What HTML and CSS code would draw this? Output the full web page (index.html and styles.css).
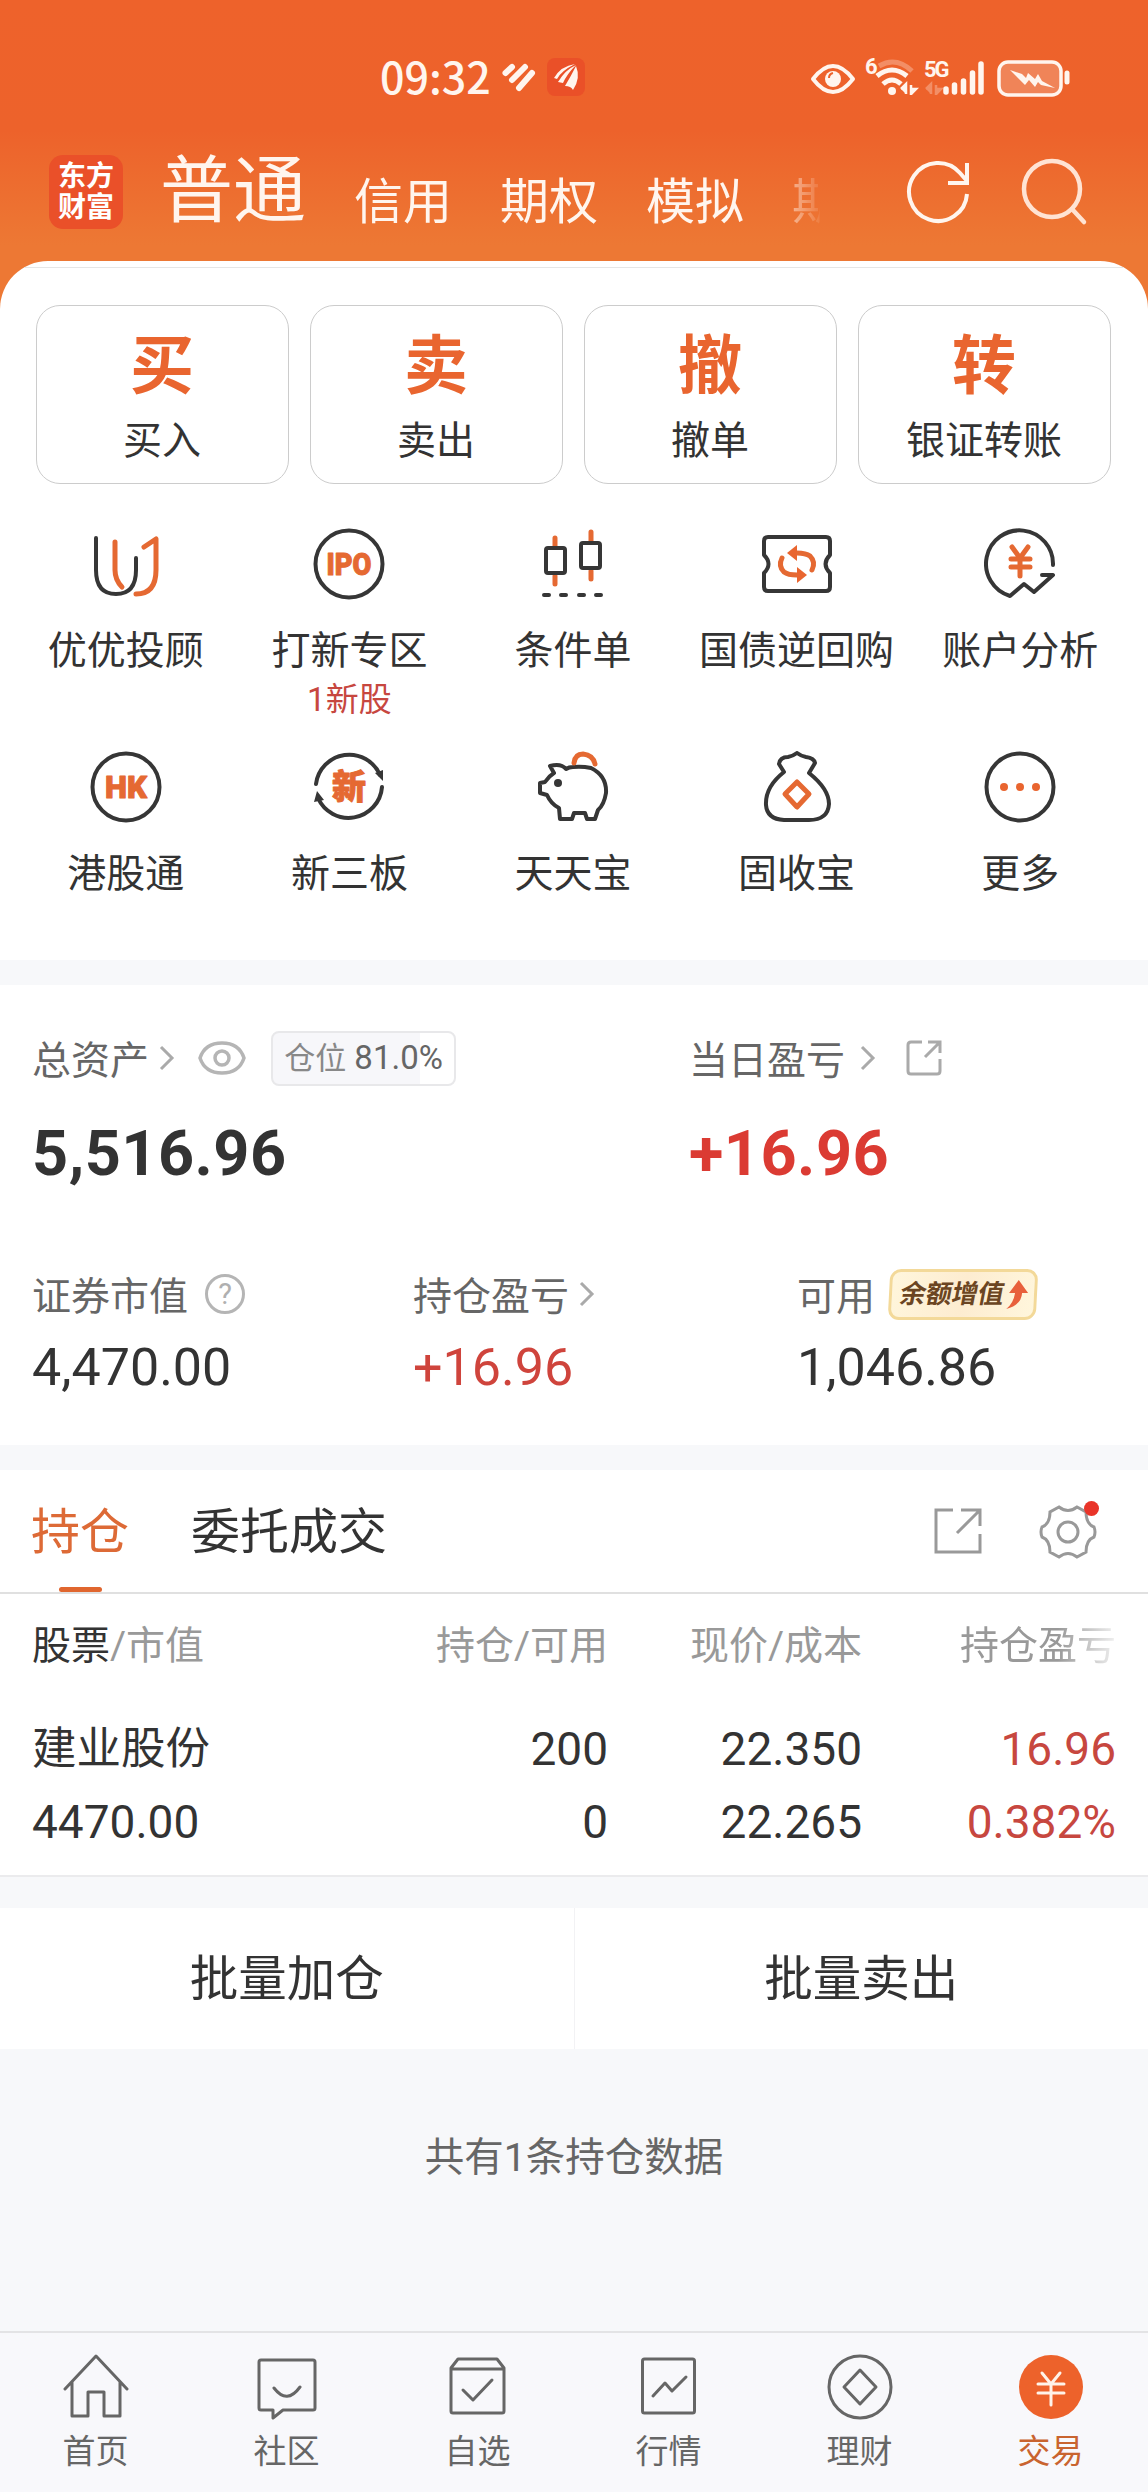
FILE: index.html
```html
<!DOCTYPE html>
<html lang="zh-CN">
<head>
    <meta charset="UTF-8">
    <title>交易</title>
    <link rel="stylesheet" href="styles.css">
</head>
<body>
<div class="app">

    <!-- Status bar -->
    <div class="status">
        <span class="clock">09:32</span>
        <svg class="heart" width="36" height="30" viewBox="0 0 36 30" fill="none" stroke="#fff5ee" stroke-width="6" stroke-linecap="round">
            <path d="M4.500 11L11 5M11 18L24 5M18 26L31 11"/>
        </svg>
        <svg class="mini-app" width="38" height="38" viewBox="0 0 38 38">
            <rect width="38" height="38" rx="8" fill="#ea5028"/>
            <path d="M7 20Q14 8 28 6Q14 13 10 21zM11 24Q18 12 29 7Q20 16 16 25zM18 28Q24 18 29 8Q34 20 26 32Q24 28 18 28z" fill="#fff5ee"/>
        </svg>
        <svg class="sys" width="264" height="44" viewBox="0 0 264 44" fill="none" stroke="#fff5ee">
            <path d="M3 24Q23-2 43 24Q23 50 3 24z" stroke-width="4" stroke-linejoin="round"/>
            <circle cx="23" cy="24" r="8" fill="#fff5ee" stroke="none"/>
            <path d="M19 23q0-4 4-5" stroke="#ed622b" stroke-width="2"/>
            <text x="55" y="19" class="sys-text">6</text>
            <path d="M69 11Q86 1 102 16" stroke-width="5" opacity=".3"/>
            <path d="M67 21Q82 9 97 21M73 29Q82 21 91 29" stroke-width="5"/>
            <circle cx="82" cy="36" r="4" fill="#fff5ee" stroke="none"/>
            <path d="M91 34l5-5v10M101 40V30M101 39l5-5h-5" fill="#fff5ee" stroke-width="2.500"/>
            <text x="114" y="22" class="sys-text">5G</text>
            <path d="M116 34l5-5v10M126 40V30M126 39l5-5h-5" fill="#fff5ee" stroke-width="2.500" opacity=".3"/>
            <path d="M136 34v3M144.500 30v7M153.500 26v11M162.500 18v19M171 9v28" stroke-width="5.500" stroke-linecap="round"/>
            <rect x="189" y="7" width="62" height="33" rx="9" fill="#f08458" stroke-width="3.500"/>
            <path d="M200 15l12 4 4 4 2-5 7 6 3-5 4 7 13 7-14-3-3-3-3 5-6-7-4 5z" fill="#fff5ee" stroke="none"/>
            <path d="M257 18v9" stroke-width="5" stroke-linecap="round"/>
        </svg>
    </div>

    <!-- Account tabs -->
    <div class="nav">
        <div class="logo">东方<br>财富</div>
        <div class="nav-tab active">普通</div>
        <div class="nav-tab">信用</div>
        <div class="nav-tab">期权</div>
        <div class="nav-tab">模拟</div>
        <div class="nav-tab cut">期</div>
        <svg class="refresh" width="70" height="72" viewBox="0 0 70 72" fill="none" stroke="#fff5ee" stroke-width="4">
            <path d="M63 37A29 29 0 1 1 56 16L63 24"/>
            <path d="M63 6V26H44"/>
        </svg>
        <svg class="search" width="70" height="72" viewBox="0 0 70 72" fill="none" stroke="#ffe3d3" stroke-width="4.500" stroke-linecap="round">
            <circle cx="32" cy="32" r="28"/>
            <path d="M52 52L64 65"/>
        </svg>
    </div>

    <div class="sheet">
        <div class="sheet-line"></div>

        <div class="cards">
            <div class="card"><b>买</b><span>买入</span></div>
            <div class="card"><b>卖</b><span>卖出</span></div>
            <div class="card"><b>撤</b><span>撤单</span></div>
            <div class="card"><b>转</b><span>银证转账</span></div>
        </div>

        <div class="grid">
            <div class="cell">
                <svg class="icon" viewBox="0 0 72 72">
                    <path class="dk" d="M6 10V42Q6 66 26 66Q46 66 46 42V30"/>
                    <path class="or" d="M25 14V42Q25 52 32 59M54 19L66 11V42Q66 66 46 66"/>
                </svg>
                <span>优优投顾</span>
            </div>
            <div class="cell">
                <svg class="icon" viewBox="0 0 72 72">
                    <circle class="dk" cx="36" cy="36" r="33.500"/>
                    <text class="icon-text" x="36" y="47" font-size="31" textLength="45" lengthAdjust="spacingAndGlyphs">IPO</text>
                </svg>
                <span>打新专区</span>
                <em>1新股</em>
            </div>
            <div class="cell">
                <svg class="icon" viewBox="0 0 72 72">
                    <path class="or" d="M18 10V18M18 48V56M54 4V13M54 43V51"/>
                    <rect class="dk" x="9" y="20" width="19" height="25" rx="2"/>
                    <rect class="dk" x="44" y="15" width="19" height="25" rx="2"/>
                    <path class="dk" d="M7 67h5M24 67h5M42 67h5M59 67h5"/>
                </svg>
                <span>条件单</span>
            </div>
            <div class="cell">
                <svg class="icon" viewBox="0 0 72 72">
                    <path class="dk" d="M7 9H65Q69 9 69 13V27Q60 36 69 45V59Q69 63 65 63H7Q3 63 3 59V45Q12 36 3 27V13Q3 9 7 9z"/>
                    <path class="or" d="M21 30Q17 38 23 44Q27 47 36 47M51 42Q55 34 49 28Q45 25 36 25"/>
                    <path class="of" d="M26 25L36 17V33zM46 47L36 39V55z"/>
                </svg>
                <span>国债逆回购</span>
            </div>
            <div class="cell">
                <svg class="icon" viewBox="0 0 72 72">
                    <path class="dk" d="M69 37A33.500 33.500 0 1 0 26 68L40 56L50 64L69 47H58"/>
                    <path class="or" d="M28 19L36 30L44 19M36 30V48M27 31H46M27 39H46"/>
                </svg>
                <span>账户分析</span>
            </div>
            <div class="cell">
                <svg class="icon" viewBox="0 0 72 72">
                    <circle class="dk" cx="36" cy="36" r="33.500"/>
                    <text class="icon-text" x="36" y="47" font-size="31" textLength="42" lengthAdjust="spacingAndGlyphs">HK</text>
                </svg>
                <span>港股通</span>
            </div>
            <div class="cell">
                <svg class="icon" viewBox="0 0 72 72">
                    <path class="dk" d="M3 33A33.500 33.500 0 0 1 67 24M69 36A33.500 33.500 0 0 1 5 47"/>
                    <path class="df" d="M62 22L70 19V30zM1 51L4 40L11 49z"/>
                    <text class="icon-text" x="36" y="48" font-size="34">新</text>
                </svg>
                <span>新三板</span>
            </div>
            <div class="cell">
                <svg class="icon" viewBox="0 0 72 72">
                    <path class="dk" d="M36 16Q45 15 54 17Q70 25 69 42Q67 54 61 59L58 68H50L48 62H37L35 68H23L22 57Q14 53 10 44L3 42V32L8 31Q12 25 17 22L13 15Q24 12 29 18Q32 16 36 16z"/>
                    <path class="or" d="M37 12Q38 3 46 3Q56 4 58 13"/>
                    <circle class="df" cx="21" cy="32" r="4"/>
                </svg>
                <span>天天宝</span>
            </div>
            <div class="cell">
                <svg class="icon" viewBox="0 0 72 72">
                    <path class="dk" d="M23 21L18 13Q19 6 27 6Q32 5 36 2Q40 5 45 6Q53 7 54 12L48 22Q68 38 68 53Q67 69 48 69H23Q6 68 5 54Q4 36 23 21z"/>
                    <path class="or" d="M36 31L48 43L36 56L24 43z"/>
                </svg>
                <span>固收宝</span>
            </div>
            <div class="cell">
                <svg class="icon" viewBox="0 0 72 72">
                    <circle class="dk" cx="36" cy="36" r="33.500"/>
                    <circle class="of" cx="20" cy="36" r="4"/>
                    <circle class="of" cx="36" cy="36" r="4"/>
                    <circle class="of" cx="52" cy="36" r="4"/>
                </svg>
                <span>更多</span>
            </div>
        </div>
    </div>

    <div class="gap"></div>

    <!-- Assets -->
    <div class="assets">
        <div class="total">
            <div class="col">
                <div class="label"><span>总资产</span>
                    <svg class="chev" width="16" height="26" viewBox="0 0 16 26"><path d="M2 2L13 13L2 24"/></svg>
                    <svg class="eye" width="48" height="34" viewBox="0 0 48 34"><path d="M2 17Q7 2 24 2T46 17Q41 32 24 32T2 17z"/><circle cx="24" cy="17" r="7"/></svg>
                    <div class="position"><i>仓位</i> 81.0%</div>
                </div>
                <div class="big">5,516.96</div>
            </div>
            <div class="col">
                <div class="label"><span>当日盈亏</span>
                    <svg class="chev wide" width="16" height="26" viewBox="0 0 16 26"><path d="M2 2L13 13L2 24"/></svg>
                    <svg class="share" width="38" height="38" viewBox="0 0 38 38"><path d="M17 3H6Q3 3 3 6V32Q3 35 6 35H32Q35 35 35 32V20M23 3H35V14M34 4L20 18"/></svg>
                </div>
                <div class="big red">+16.96</div>
            </div>
        </div>
        <div class="detail">
            <div class="col">
                <div class="label"><span>证券市值</span>
                    <svg class="help" width="42" height="42" viewBox="0 0 42 42"><circle cx="21" cy="21" r="18.500"/><text x="21" y="31">?</text></svg>
                </div>
                <div class="num">4,470.00</div>
            </div>
            <div class="col">
                <div class="label"><span>持仓盈亏</span>
                    <svg class="chev" width="16" height="26" viewBox="0 0 16 26"><path d="M2 2L13 13L2 24"/></svg>
                </div>
                <div class="num red">+16.96</div>
            </div>
            <div class="col">
                <div class="label"><span>可用</span>
                    <div class="promo"><b>余额增值</b><svg width="24" height="32" viewBox="0 0 24 32"><path d="M13 1L23 14H17Q17 26 2 30Q9 24 10 14H4z" fill="#e8603c"/></svg></div>
                </div>
                <div class="num">1,046.86</div>
            </div>
        </div>
    </div>

    <div class="gap"></div>

    <!-- Holdings -->
    <div class="tabs">
        <div class="tab active">持仓</div>
        <div class="tab">委托成交</div>
        <svg class="open" width="50" height="50" viewBox="0 0 50 50"><path d="M20 4H3V46H47V28M28 4H47V20M46 5L24 27"/></svg>
        <div class="gear">
            <svg width="58" height="58" viewBox="0 0 58 58"><path d="M20 4Q29 11 38 4L47 9Q47 21 55 24Q57 29 55 34Q47 37 47 49L38 54Q29 47 20 54L11 49Q11 37 3 34Q1 29 3 24Q11 21 11 9z"/><circle cx="29" cy="29" r="10"/></svg>
            <i class="dot"></i>
        </div>
    </div>
    <div class="holdings">
        <div class="row head">
            <span><strong>股票</strong>/市值</span><span>持仓/可用</span><span>现价/成本</span><span class="fade">持仓盈亏</span>
        </div>
        <div class="row">
            <span class="name">建业股份</span><span>200</span><span>22.350</span><span class="up">16.96</span>
        </div>
        <div class="row">
            <span>4470.00</span><span>0</span><span>22.265</span><span class="up">0.382%</span>
        </div>
    </div>

    <div class="batch">
        <div>批量加仓</div>
        <div>批量卖出</div>
    </div>

    <div class="summary">共有1条持仓数据</div>

    <!-- Bottom bar -->
    <div class="bar">
        <div class="bar-item">
            <svg viewBox="0 0 66 66"><path d="M2 35L33 2L64 35M9 28V62H25V38H41V62H57V28"/></svg>首页
        </div>
        <div class="bar-item">
            <svg viewBox="0 0 66 66"><path d="M7 6H59Q61 6 61 8V54Q61 56 59 56H29L19 64V56H7Q5 56 5 54V8Q5 6 7 6zM20 34Q33 51 46 33"/></svg>社区
        </div>
        <div class="bar-item">
            <svg viewBox="0 0 66 66"><path d="M13 5H52L59 14V57Q59 59 57 59H8Q6 59 6 57V14zM6 15H59M18 36L28 46L47 26"/></svg>自选
        </div>
        <div class="bar-item">
            <svg viewBox="0 0 66 66"><rect x="6.500" y="5" width="52" height="54" rx="2"/><path d="M17 42L29 29L36 37L50 23"/></svg>行情
        </div>
        <div class="bar-item">
            <svg viewBox="0 0 66 66"><circle cx="33" cy="33" r="31"/><path d="M33 16L49 33L33 50L17 33z"/></svg>理财
        </div>
        <div class="bar-item on">
            <svg viewBox="0 0 66 66"><circle class="disc" cx="33" cy="33" r="32"/><path d="M24 19L33 30L42 19M33 30V51M20 30H46M20 39H46"/></svg>交易
        </div>
    </div>
</div>
</body>
</html>
```

FILE: styles.css
```css
body {
    margin: 0;
    font-family: Roboto, "Noto Sans CJK SC", sans-serif;
    color: #333;
}

.app {
    width: 1148px;
    height: 2492px;
    display: flex;
    flex-direction: column;
    overflow: hidden;
    background: linear-gradient(#ee622b 0, #ed622b 130px, #ed7834 245px, #ed7834 320px, #f7f8fa 320px);
}

i, em {
    font-style: normal;
}

svg {
    display: block;
    flex: none;
}

/* status bar */
.status {
    height: 156px;
    box-sizing: border-box;
    padding: 0 0 2px 380px;
    display: flex;
    align-items: center;
    color: #fff5ee;
}

.clock {
    font-family: "Noto Sans CJK SC", sans-serif;
    font-size: 43px;
    font-weight: 500;
    line-height: 46px;
    padding-bottom: 4px;
    width: 121px;
}

.mini-app {
    margin-left: 10px;
}

.sys {
    margin-left: 225px;
}

.sys-text {
    fill: #fff5ee;
    stroke: none;
    font-size: 22px;
    font-weight: 700;
    letter-spacing: -2px;
}

/* account tabs */
.nav {
    height: 105px;
    display: flex;
    color: #fff5ee;
    box-sizing: border-box;
    padding-left: 49px;
}

.logo {
    width: 74px;
    height: 74px;
    margin: -1px 37px 0 0;
    border-radius: 14px;
    background: #ea5029;
    color: #fff;
    font-size: 28px;
    font-weight: 700;
    line-height: 31px;
    text-align: center;
    box-sizing: border-box;
    padding-top: 6px;
}

.nav-tab {
    font-size: 49px;
    line-height: 60px;
    padding-top: 17px;
    margin-right: 48px;
    white-space: nowrap;
}

.nav-tab.active {
    font-size: 73px;
    line-height: 76px;
    padding-top: 0;
    margin-top: -3px;
}

/* last tab fades out under the toolbar icons */
.nav-tab.cut {
    height: 60px;
    margin-right: 63px;
    -webkit-mask-image: linear-gradient(90deg, rgba(0,0,0,.5), rgba(0,0,0,.1) 55%, transparent 58%);
    mask-image: linear-gradient(90deg, rgba(0,0,0,.5), rgba(0,0,0,.1) 55%, transparent 58%);
}

.refresh {
    margin-top: 1px;
}

.search {
    margin: 1px 0 0 46px;
}

/* white sheet */
.sheet {
    height: 699px;
    background: #fff;
    border-radius: 48px 48px 0 0;
}

.sheet-line {
    height: 1px;
    margin: 6px 24px 0;
    background: #e6e6e6;
    position: relative;
}

.cards {
    display: grid;
    grid-template-columns: repeat(4, 1fr);
    gap: 21px;
    padding: 37px 37px 0 36px;
}

.card {
    height: 179px;
    box-sizing: border-box;
    border: 1.5px solid #ccc;
    border-radius: 24px;
    display: flex;
    flex-direction: column;
    align-items: center;
    padding: 25px 1px 0 0;
}

.card b {
    font-size: 64px;
    line-height: 72px;
    color: #e9652f;
}

.card span {
    font-size: 39px;
    line-height: 50px;
    margin-top: 13px;
}

.grid {
    display: grid;
    grid-template-columns: repeat(5, 1fr);
    grid-auto-rows: 223px;
    padding: 44px 16px 0 14px;
}

.cell {
    display: flex;
    flex-direction: column;
    align-items: center;
    font-size: 39px;
    line-height: 50px;
    white-space: nowrap;
}

.icon {
    width: 72px;
    height: 72px;
    margin-bottom: 26px;
}

.cell em {
    font-size: 33px;
    line-height: 48px;
    color: #c7473f;
}

.dk, .or {
    fill: none;
    stroke: #363636;
    stroke-width: 4;
    stroke-linecap: round;
    stroke-linejoin: round;
}

.or {
    stroke: #e56932;
    stroke-width: 5;
}

.df {
    fill: #363636;
}

.of {
    fill: #e9652f;
}

.icon-text {
    fill: #e56932;
    stroke: #e56932;
    stroke-width: 1;
    stroke-linejoin: round;
    font-weight: 900;
    text-anchor: middle;
}

.gap {
    height: 25px;
    background: #f7f8fa;
}

/* assets */
.assets {
    height: 460px;
    background: #fff;
}

.total, .detail {
    display: grid;
    grid-template-columns: 657px 1fr;
    padding: 43px 32px 0;
}

.detail {
    grid-template-columns: 381px 384px 1fr;
    padding-top: 75px;
}

.label {
    display: flex;
    align-items: center;
    height: 60px;
    font-size: 39px;
    color: #666;
    white-space: nowrap;
}

.label > span {
    padding-bottom: 3px;
}

.label svg {
    fill: none;
    stroke: #aaa;
    stroke-width: 3;
}

.label .chev {
    margin-left: 10px;
}

.label .chev.wide {
    margin-left: 15px;
}

.label .eye {
    margin-left: 23px;
    stroke: #b5b5b5;
    stroke-width: 3.5;
}

.label .share {
    margin-left: 29px;
}

.label .help {
    margin-left: 16px;
    stroke: #b5b5b5;
}

.help text {
    fill: #b0b0b0;
    stroke: none;
    font-size: 29px;
    text-anchor: middle;
}

.position {
    margin-left: 25px;
    width: 185px;
    height: 55px;
    box-sizing: border-box;
    border: 2px solid #e8e8ea;
    border-radius: 8px;
    background: linear-gradient(90deg, #f7f7fa 81%, #fff 81%);
    font-size: 33px;
    line-height: 49px;
    text-align: center;
}

.position i {
    font-size: 31px;
    color: #888;
}

.big {
    font-size: 63px;
    font-weight: 700;
    line-height: 70px;
    margin-top: 31px;
    letter-spacing: 0.5px;
}

.num {
    font-size: 52px;
    line-height: 60px;
    margin-top: 14px;
}

.red {
    color: #db3b33;
}

.num.red {
    color: #cf443c;
}

.promo {
    margin-left: 14px;
    width: 148px;
    height: 51px;
    box-sizing: border-box;
    border: 3px solid #f3d999;
    border-radius: 11px;
    background: linear-gradient(100deg, #fff6dc, #fdecd0 50%, #fff6dc);
    transform: skewX(-3deg);
    display: flex;
    align-items: center;
    padding-left: 8px;
}

.promo b {
    font-size: 26px;
    line-height: 42px;
    padding-bottom: 2px;
    color: #6b4522;
    transform: skewX(-8deg);
}

.promo svg {
    stroke: none;
    margin-left: 1px;
}

/* holdings */
.tabs {
    height: 124px;
    box-sizing: border-box;
    border-bottom: 2px solid #e0e0e0;
    background: #fff;
    display: flex;
    padding-left: 31px;
    font-size: 49px;
    line-height: 126px;
}

.tab {
    margin-right: 62px;
}

.tab.active {
    color: #dd6a36;
    display: flex;
    flex-direction: column;
    align-items: center;
}

.tab.active::after {
    content: "";
    width: 43px;
    height: 6px;
    border-radius: 3px;
    background: #e0662f;
    margin-top: -9px;
}

.tabs svg {
    fill: none;
    stroke: #999;
    stroke-width: 3;
}

.open {
    margin: 36px 0 0 484px;
}

.gear {
    position: relative;
    margin: 33px 0 0 56px;
    width: 58px;
    height: 58px;
}

.dot {
    position: absolute;
    right: -2px;
    top: -2px;
    width: 15px;
    height: 15px;
    border-radius: 50%;
    background: #e93429;
}

.holdings {
    height: 283px;
    box-sizing: border-box;
    border-bottom: 2px solid #ebebed;
    background: #fff;
    padding-top: 15px;
}

.row {
    display: grid;
    grid-template-columns: 276px 300px 254px 254px;
    padding-left: 32px;
    height: 73px;
    line-height: 74px;
    font-size: 46px;
}

.row span {
    text-align: right;
    white-space: nowrap;
}

.row span:first-child {
    text-align: left;
}

.row.head {
    font-size: 39px;
    height: 103px;
    color: #999;
}

.head strong {
    font-weight: 400;
    color: #333;
}

.row .name {
    font-size: 44.5px;
}

.row .up {
    color: #c7473f;
}

.fade {
    -webkit-mask-image: linear-gradient(90deg, #000 77%, rgba(0,0,0,.15) 100%);
    mask-image: linear-gradient(90deg, #000 77%, rgba(0,0,0,.15) 100%);
}

.batch {
    display: flex;
    height: 141px;
    margin-top: 31px;
    background: #fff;
}

.batch div {
    flex: 1;
    text-align: center;
    font-size: 48.5px;
    line-height: 144px;
}

.batch div + div {
    border-left: 1px solid #f2f2f4;
}

.summary {
    height: 282px;
    box-sizing: border-box;
    padding-top: 84px;
    text-align: center;
    font-size: 39.5px;
    line-height: 50px;
    color: #666;
}

/* bottom bar */
.bar {
    flex: 1;
    display: grid;
    grid-template-columns: repeat(6, 1fr);
    border-top: 2px solid #e3e3e5;
    background: #f8f8fb;
    padding-right: 2px;
}

.bar-item {
    display: flex;
    flex-direction: column;
    align-items: center;
    font-size: 33px;
    line-height: 44px;
    color: #666;
}

.bar-item svg {
    width: 66px;
    height: 66px;
    margin: 21px 0 10px;
    fill: none;
    stroke: #666;
    stroke-width: 3;
    stroke-linecap: round;
    stroke-linejoin: round;
}

.bar-item.on {
    color: #c9642f;
}

.bar-item.on svg {
    stroke: #fff3ea;
}

.disc {
    fill: #ed622b;
    stroke: none;
}
```
